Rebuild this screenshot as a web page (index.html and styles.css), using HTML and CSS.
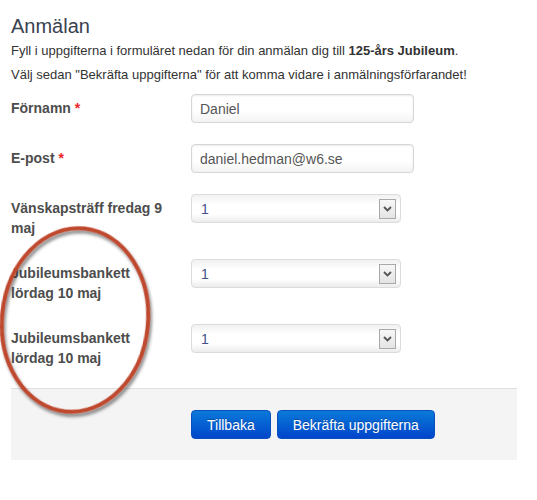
FILE: index.html
```html
<!DOCTYPE html>
<html lang="sv">
<head>
<meta charset="utf-8">
<title>Anmälan</title>
<link rel="stylesheet" href="styles.css">
</head>
<body>
<div class="page">
  <h2 class="title">Anmälan</h2>
  <p class="intro">Fyll i uppgifterna i formuläret nedan för din anmälan dig till <strong>125-års Jubileum</strong>.</p>
  <p class="intro second">Välj sedan "Bekräfta uppgifterna" för att komma vidare i anmälningsförfarandet!</p>

  <form class="form">
    <div class="fields">
      <label class="label">Förnamn <span class="req">*</span></label>
      <input class="text" type="text" value="Daniel">

      <label class="label">E-post <span class="req">*</span></label>
      <input class="text" type="text" value="daniel.hedman@w6.se">

      <label class="label">Vänskapsträff fredag 9 maj</label>
      <div class="select"><span class="val">1</span><span class="arrow"><svg width="9" height="6" viewBox="0 0 9 6"><path d="M1 1 L4.5 4.5 L8 1" fill="none" stroke="#555" stroke-width="1.8"/></svg></span></div>

      <label class="label">Jubileumsbankett lördag 10 maj</label>
      <div class="select"><span class="val">1</span><span class="arrow"><svg width="9" height="6" viewBox="0 0 9 6"><path d="M1 1 L4.5 4.5 L8 1" fill="none" stroke="#555" stroke-width="1.8"/></svg></span></div>

      <label class="label">Jubileumsbankett lördag 10 maj</label>
      <div class="select"><span class="val">1</span><span class="arrow"><svg width="9" height="6" viewBox="0 0 9 6"><path d="M1 1 L4.5 4.5 L8 1" fill="none" stroke="#555" stroke-width="1.8"/></svg></span></div>
    </div>

    <div class="actions">
      <button type="button" class="btn">Tillbaka</button>
      <button type="button" class="btn">Bekräfta uppgifterna</button>
    </div>
  </form>

  <svg class="circle" width="170" height="210" viewBox="0 0 170 210">
    <defs>
      <filter id="sh" x="-20%" y="-20%" width="140%" height="140%">
        <feDropShadow dx="2" dy="3" stdDeviation="1.6" flood-color="#333" flood-opacity="0.55"/>
      </filter>
    </defs>
    <ellipse cx="75" cy="100" rx="73" ry="92" transform="rotate(6 75 100)" fill="none" stroke="#bf4a2f" stroke-width="4" filter="url(#sh)"/>
  </svg>
</div>
</body>
</html>
```

FILE: styles.css
```css
* { box-sizing: border-box; }

body {
  margin: 0;
  background: #fff;
  font-family: "Liberation Sans", Arial, sans-serif;
  color: #333;
}

.page {
  position: relative;
  padding: 0 20px 0 11px;
  width: 537px;
}

.title {
  margin: 0;
  padding-top: 14px;
  font-size: 20px;
  font-weight: normal;
  line-height: 24px;
  color: #3a4150;
}

.intro {
  margin: 4px 0 0;
  font-size: 13px;
  line-height: 18px;
}

.intro.second {
  margin-top: 6px;
}

.form {
  width: 506px;
  margin-top: 10px;
}

.fields {
  display: grid;
  grid-template-columns: 160px auto;
  column-gap: 20px;
  row-gap: 21px;
  align-items: start;
  justify-items: start;
  padding-bottom: 20px;
}

.label {
  padding-top: 5px;
  font-size: 14px;
  font-weight: bold;
  line-height: 19.5px;
  color: #4d4d4d;
}

.req { color: #e8262b; }

.text {
  width: 223px;
  height: 29px;
  margin: 0;
  padding: 0 8px;
  border: 1px solid #d6d6d6;
  border-radius: 4px;
  background: linear-gradient(#fff 60%, #f3f3f3);
  box-shadow: inset 0 1px 2px rgba(0,0,0,0.08);
  font-family: "Liberation Sans", Arial, sans-serif;
  font-size: 14px;
  color: #555;
}

.select {
  width: 210px;
  height: 29px;
  display: flex;
  align-items: center;
  padding: 0 4px 0 9px;
  border: 1px solid #dcdcdc;
  border-radius: 4px;
  background: linear-gradient(#f1f1f1, #fff 35%, #fff 70%, #ececec);
}

.val {
  flex: 1;
  font-size: 14px;
  color: #44508a;
}

.arrow {
  width: 17px;
  height: 20px;
  display: flex;
  align-items: center;
  justify-content: center;
  border: 1px solid #a9a9a9;
  background: linear-gradient(#f7f7f7, #e4e4e4);
}

.actions {
  display: flex;
  gap: 6px;
  padding: 21px 0 21px 180px;
  border-top: 1px solid #e0e0e0;
  background: #f4f4f4;
}

.btn {
  height: 29px;
  padding: 0 15px;
  border: 1px solid #0a4fc0;
  border-radius: 4px;
  background: linear-gradient(#0a7ad9, #0045cb);
  color: #fff;
  font-family: "Liberation Sans", Arial, sans-serif;
  font-size: 14px;
  text-shadow: 0 -1px 0 rgba(0,0,0,0.25);
}

.circle {
  position: absolute;
  left: 0;
  top: 220px;
}
```
